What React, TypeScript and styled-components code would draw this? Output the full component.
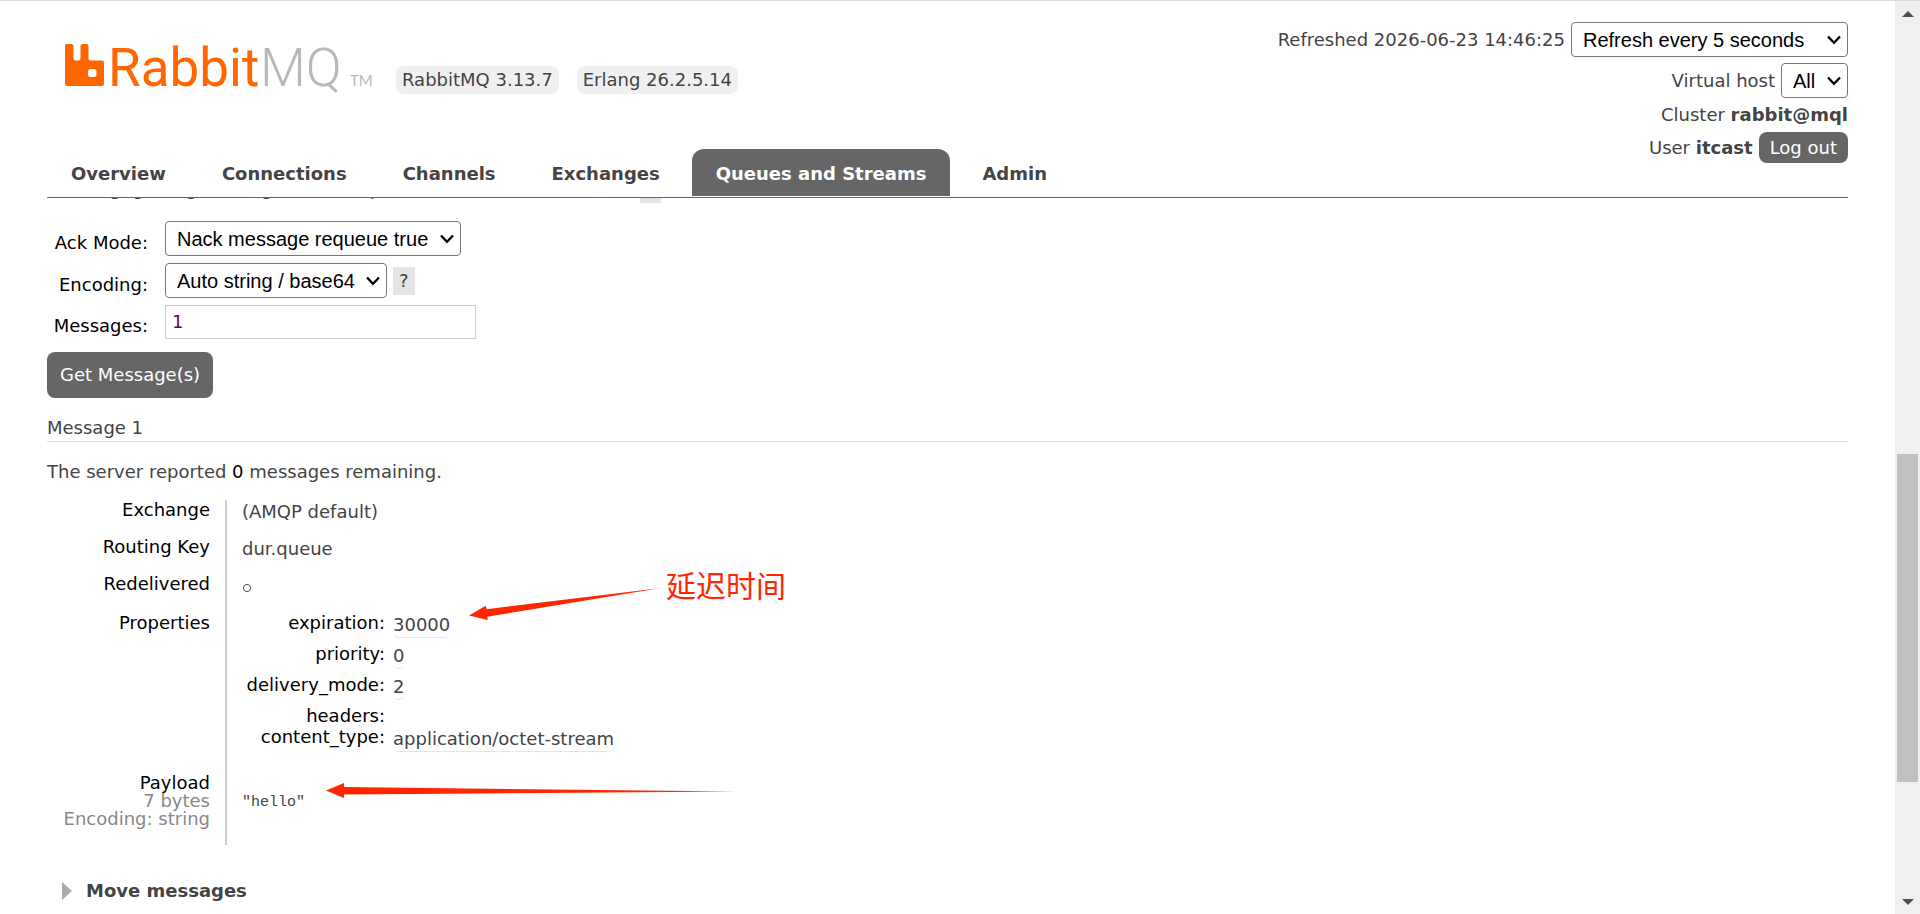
import React from 'react';
import styled, { createGlobalStyle } from 'styled-components';

const GlobalStyle = createGlobalStyle`
  *, *::before, *::after { box-sizing: border-box; }
  body {
    margin: 0;
    background: #fff;
    color: #444;
    font: 18px/22px Verdana, "DejaVu Sans", sans-serif;
  }
  button, input { font: inherit; }
`;

const Page = styled.div`
  display: grid;
  grid-template-columns: minmax(0, 1fr) 25px;
  height: 100vh;
  overflow: hidden;
  border-top: 1px solid #dadada;
`;

const Column = styled.div`
  display: flex;
  flex-direction: column;
  min-width: 0;
  overflow: hidden;
`;

const Header = styled.header`
  display: flex;
  justify-content: space-between;
  flex: none;
  margin: 0 47px;
  padding-top: 21px;
  border-bottom: 1px solid #666;
  background: #fff;
`;

const HeaderLeft = styled.div`
  display: flex;
  flex-direction: column;
  justify-content: space-between;
  padding-bottom: 1px;
`;

const Brand = styled.div`
  display: flex;
  align-items: flex-end;
  gap: 18px;
  padding: 14px 0 0 17px;
`;

const LogoLink = styled.a`
  display: block;
  margin-right: 6px;
  svg { display: block; }
`;

const Version = styled.span`
  padding: 3px 6px;
  border-radius: 8px;
  background: #f0f0f0;
`;

const Tabs = styled.nav`
  display: flex;
  gap: 8px;
`;

const Tab = styled.a<{ $active?: boolean }>`
  padding: 14px 24px 11px;
  border-radius: 12px 12px 0 0;
  background: ${p => (p.$active ? '#666' : 'transparent')};
  color: ${p => (p.$active ? '#fff' : '#444')};
  font-weight: bold;
  text-decoration: none;
  white-space: nowrap;
`;

const Status = styled.ul`
  display: flex;
  flex-direction: column;
  align-items: flex-end;
  gap: 6px;
  margin: 0;
  padding: 0 0 34px;
  list-style: none;
`;

const StatusRow = styled.li`
  display: flex;
  align-items: center;
  gap: 6px;
  white-space: nowrap;
`;

const Button = styled.button<{ $large?: boolean }>`
  padding: ${p => (p.$large ? '12px 13px' : '5px 11px 4px')};
  border: 0;
  border-radius: 8px;
  background: #666;
  color: #fff;
`;

const SelectWrap = styled.span`
  position: relative;
  display: inline-flex;
  svg {
    position: absolute;
    top: 13px;
    right: 7px;
    pointer-events: none;
  }
`;

const NativeSelect = styled.select`
  appearance: none;
  height: 35px;
  padding: 0 31px 0 11px;
  border: 1px solid #767676;
  border-radius: 4px;
  background: #fff;
  color: #000;
  font: 20px "Liberation Sans", Arial, sans-serif;
`;

const Content = styled.main`
  position: relative;
  flex: 1;
  min-height: 0;
  padding: 0 47px;
  overflow: hidden;
`;

const Warning = styled.p`
  display: flex;
  align-items: center;
  gap: 9px;
  margin: -23px 0 18px;
`;

const Help = styled.a`
  padding: 3px 6px;
  background: #e4e4e4;
  color: #444;
  text-decoration: none;
`;

const Form = styled.form`
  display: flex;
  flex-direction: column;
  align-items: flex-start;
  gap: 7px;
`;

const Field = styled.div`
  display: grid;
  grid-template-columns: 112px auto auto;
  align-items: center;
  column-gap: 6px;
`;

const FieldLabel = styled.label`
  align-self: end;
  padding: 0 11px 2px 0;
  color: #000;
  text-align: right;
`;

const TextInput = styled.input`
  width: 311px;
  height: 34px;
  padding: 0 6px 2px;
  border: 1px solid #ccc;
  color: #606;
`;

const SubmitRow = styled.div`
  padding-top: 6px;
`;

const MessageHeading = styled.h3`
  margin: 19px 0 0;
  padding-bottom: 2px;
  border-bottom: 1px solid #ddd;
  font-size: 18px;
  font-weight: normal;
`;

const Remaining = styled.p`
  margin: 19px 0 17px;
  b { color: #000; font-weight: normal; }
`;

const Facts = styled.table`
  border-collapse: collapse;
  line-height: 18px;
`;

const FactRow = styled.tr<{ $height: number }>`
  height: ${p => p.$height}px;
  vertical-align: top;
`;

const FactName = styled.th`
  width: 179px;
  padding: 1px 15px 0 0;
  color: #000;
  font-weight: normal;
  text-align: right;
  white-space: nowrap;
`;

const Muted = styled.span`
  display: block;
  color: #888;
`;

const FactValue = styled.td<{ $flush?: boolean }>`
  padding: ${p => (p.$flush ? 0 : '3px')} 0 0 15px;
  border-left: 2px solid #ccc;
`;

const Circle = styled.svg`
  display: block;
  margin-top: 6px;
`;

const Properties = styled.table`
  border-collapse: collapse;
`;

const PropertyName = styled.th`
  width: 151px;
  padding: 1px 8px 0 0;
  color: #000;
  font-weight: normal;
  text-align: right;
`;

const PropertyValue = styled.td`
  padding: 3px 0 0;
`;

const Abbr = styled.span`
  display: inline-block;
  height: 22px;
  border-bottom: 1px dotted #ccc;
  border-radius: 6px;
`;

const Payload = styled.pre`
  margin: 18px 0 0;
  font: 15px/18px SimSun, "Liberation Mono", monospace;
`;

const Section = styled.h2`
  display: flex;
  align-items: center;
  gap: 14px;
  margin: 35px 0 0;
  padding-left: 15px;
  font-size: 18px;
`;

const Annotations = styled.div`
  position: absolute;
  top: 374px;
  left: 326px;
  color: #ff2600;
  pointer-events: none;
  svg { display: block; }
`;

const AnnotationText = styled.span`
  position: absolute;
  top: -8px;
  left: 340px;
  font: 30px/40px "Noto Sans CJK SC", sans-serif;
  white-space: nowrap;
`;

const ScrollBar = styled.div`
  display: flex;
  flex-direction: column;
  align-items: center;
  padding: 10px 0 9px;
  background: #f0f0f0;
`;

const ScrollSpace = styled.div<{ $grow: number; $thumb?: boolean }>`
  flex: ${p => p.$grow} 0 0;
  width: 21px;
  background: ${p => (p.$thumb ? '#c1c1c1' : 'transparent')};
`;

const tabs = ['Overview', 'Connections', 'Channels', 'Exchanges', 'Queues and Streams', 'Admin'];

const properties = [
  { name: 'expiration', value: '30000', height: 31 },
  { name: 'priority', value: '0', height: 31 },
  { name: 'delivery_mode', value: '2', height: 31 },
  { name: 'headers', value: '', height: 21 },
  { name: 'content_type', value: 'application/octet-stream', height: 31 },
];

function Select({ id, options }: { id: string; options: string[] }) {
  return (
    <SelectWrap>
      <NativeSelect id={id} defaultValue={options[0]}>
        {options.map(o => <option key={o}>{o}</option>)}
      </NativeSelect>
      <svg width="14" height="10" viewBox="0 0 14 10" aria-hidden="true">
        <path d="M1 1.5 7 7.8 13 1.5" fill="none" stroke="#000" strokeWidth="2.3" />
      </svg>
    </SelectWrap>
  );
}

function Logo() {
  return (
    <svg width="308" height="58" viewBox="0 0 308 58" role="img" aria-label="RabbitMQ">
      <path
        fill="#f60"
        fillRule="evenodd"
        d="M3 8H7.500a2 2 0 0 1 2 2V22.500a2 2 0 0 0 2 2H14.500a2 2 0 0 0 2-2V10a2 2 0 0 1 2-2H22.500a2 2 0 0 1 2 2V22.500a2 2 0 0 0 2 2H38a2 2 0 0 1 2 2V48a2 2 0 0 1-2 2H3a2 2 0 0 1-2-2V10a2 2 0 0 1 2-2ZM26.500 33a2.500 2.500 0 0 0-2.500 2.500V38.500a2.500 2.500 0 0 0 2.500 2.500H30a2.500 2.500 0 0 0 2.500-2.500V35.500a2.500 2.500 0 0 0-2.500-2.500Z"
      />
      <g fontFamily="Roboto, sans-serif" fontSize="53">
        <text x="44" y="50" fill="#f60">Rabbit</text>
        <text x="196" y="50" fill="#b8b8b8" fontWeight="300">MQ</text>
      </g>
      <text x="286" y="50" fill="#b8b8b8" fontFamily="Lato, sans-serif" fontSize="15">TM</text>
    </svg>
  );
}

export default function App() {
  return (
    <>
      <GlobalStyle />
      <Page>
        <Column>
          <Header>
            <HeaderLeft>
              <Brand>
                <LogoLink href="#/"><Logo /></LogoLink>
                <Version>RabbitMQ 3.13.7</Version>
                <Version>Erlang 26.2.5.14</Version>
              </Brand>
              <Tabs>
                {tabs.map(t => (
                  <Tab key={t} href="#/" $active={t === 'Queues and Streams'}>{t}</Tab>
                ))}
              </Tabs>
            </HeaderLeft>
            <Status>
              <StatusRow>
                <label htmlFor="refresh">Refreshed 2026-06-23 14:46:25</label>
                <Select
                  id="refresh"
                  options={['Refresh every 5 seconds', 'Refresh every 30 seconds', 'Do not refresh']}
                />
              </StatusRow>
              <StatusRow>
                <label htmlFor="vhost">Virtual host</label>
                <Select id="vhost" options={['All', '/']} />
              </StatusRow>
              <StatusRow><span>Cluster <b>rabbit@mql</b></span></StatusRow>
              <StatusRow>
                <span>User <b>itcast</b></span>
                <Button type="button">Log out</Button>
              </StatusRow>
            </Status>
          </Header>

          <Content>
            <Warning>
              Warning: getting messages from a queue is a destructive action.
              <Help href="#/">?</Help>
            </Warning>
            <Form onSubmit={e => e.preventDefault()}>
              <Field>
                <FieldLabel htmlFor="ack">Ack Mode:</FieldLabel>
                <Select id="ack" options={['Nack message requeue true']} />
              </Field>
              <Field>
                <FieldLabel htmlFor="encoding">Encoding:</FieldLabel>
                <Select id="encoding" options={['Auto string / base64', 'base64']} />
                <Help href="#/">?</Help>
              </Field>
              <Field>
                <FieldLabel htmlFor="count">Messages:</FieldLabel>
                <TextInput id="count" type="text" defaultValue="1" />
              </Field>
              <SubmitRow><Button type="submit" $large>Get Message(s)</Button></SubmitRow>
            </Form>

            <MessageHeading>Message 1</MessageHeading>
            <Remaining>The server reported <b>0</b> messages remaining.</Remaining>

            <Facts>
              <tbody>
                <FactRow $height={37}>
                  <FactName>Exchange</FactName>
                  <FactValue>(AMQP default)</FactValue>
                </FactRow>
                <FactRow $height={37}>
                  <FactName>Routing Key</FactName>
                  <FactValue>dur.queue</FactValue>
                </FactRow>
                <FactRow $height={39}>
                  <FactName>Redelivered</FactName>
                  <FactValue>
                    <Circle width="10" height="10" viewBox="0 0 10 10" aria-label="false">
                      <circle cx="5" cy="5" r="3.6" fill="none" stroke="#555" />
                    </Circle>
                  </FactValue>
                </FactRow>
                <FactRow $height={160}>
                  <FactName>Properties</FactName>
                  <FactValue $flush>
                    <Properties>
                      <tbody>
                        {properties.map(p => (
                          <FactRow key={p.name} $height={p.height}>
                            <PropertyName>{p.name}:</PropertyName>
                            <PropertyValue>{p.value && <Abbr>{p.value}</Abbr>}</PropertyValue>
                          </FactRow>
                        ))}
                      </tbody>
                    </Properties>
                  </FactValue>
                </FactRow>
                <FactRow $height={72}>
                  <FactName>
                    Payload
                    <Muted>7 bytes</Muted>
                    <Muted>Encoding: string</Muted>
                  </FactName>
                  <FactValue><Payload>"hello"</Payload></FactValue>
                </FactRow>
              </tbody>
            </Facts>

            <Section>
              <svg width="10" height="18" viewBox="0 0 10 18" aria-hidden="true">
                <path d="M0 0 10 9 0 18Z" fill="#aaa" />
              </svg>
              Move messages
            </Section>

            <Annotations>
              <svg width="410" height="230" viewBox="0 0 410 230" aria-hidden="true">
                <g fill="currentColor">
                  <path d="M143 43.500 159.700 33.700 160.700 37.200 335 16 161.300 44.700 161.700 48Z" />
                  <path d="M0 218.500 18 211 18 215 409 219.500 18 222.500 18 226Z" />
                </g>
              </svg>
              <AnnotationText>延迟时间</AnnotationText>
            </Annotations>
          </Content>
        </Column>

        <ScrollBar aria-hidden="true">
          <svg width="12" height="6" viewBox="0 0 12 6"><path d="M6 0 12 6H0Z" fill="#505050" /></svg>
          <ScrollSpace $grow={437} />
          <ScrollSpace $grow={328} $thumb />
          <ScrollSpace $grow={117} />
          <svg width="12" height="6" viewBox="0 0 12 6"><path d="M0 0H12L6 6Z" fill="#505050" /></svg>
        </ScrollBar>
      </Page>
    </>
  );
}
